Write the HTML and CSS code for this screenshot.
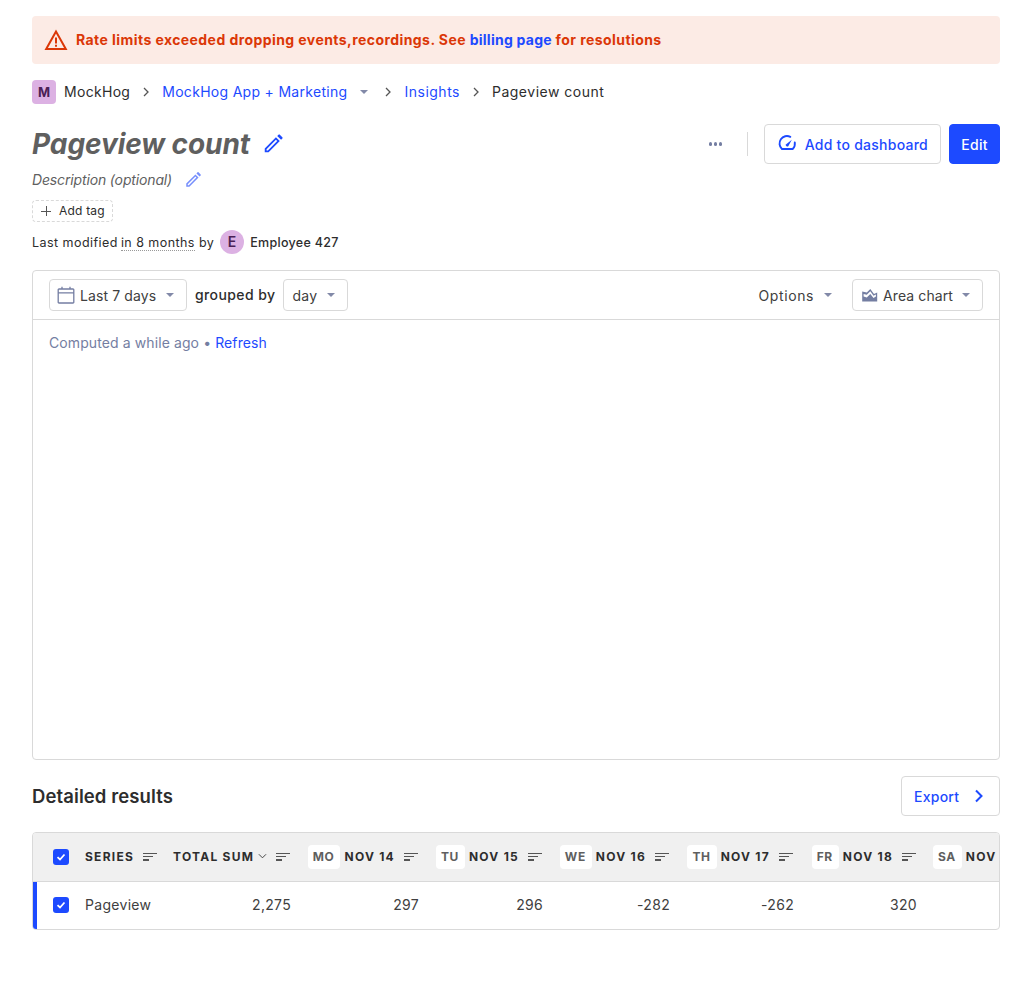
FILE: index.html
```html
<!DOCTYPE html>
<html>

<head>
  <meta charset="UTF-8">
  <title>Pageview count</title>
  <link rel="stylesheet" href="styles.css">
</head>

<body>
  <div class="alert">
    <svg class="alert-icon" width="24" height="24" viewBox="0 0 24 24">
      <path d="M12 3.600 2.200 21h19.600z" fill="none" stroke="currentColor" stroke-width="2"/>
      <path d="M11 9.500h2v6h-2zM11 16.800h2v2h-2z" fill="currentColor"/>
    </svg>
    <span>Rate limits exceeded dropping events,recordings. See <a href="#">billing page</a> for resolutions</span>
  </div>

  <nav class="breadcrumbs">
    <span class="org-badge">M</span>
    <span class="crumb">MockHog</span>
    <svg class="crumb-sep" width="8" height="10" viewBox="0 0 8 10"><path d="M2 1l4 4-4 4" fill="none" stroke="currentColor" stroke-width="1.300"/></svg>
    <a class="crumb" href="#">MockHog App + Marketing</a>
    <span class="caret caret-project"></span>
    <svg class="crumb-sep" width="8" height="10" viewBox="0 0 8 10"><path d="M2 1l4 4-4 4" fill="none" stroke="currentColor" stroke-width="1.300"/></svg>
    <a class="crumb crumb-wide" href="#">Insights</a>
    <svg class="crumb-sep" width="8" height="10" viewBox="0 0 8 10"><path d="M2 1l4 4-4 4" fill="none" stroke="currentColor" stroke-width="1.300"/></svg>
    <span class="crumb crumb-wide">Pageview count</span>
  </nav>

  <div class="page-head">
    <div class="title-row">
      <h1>Pageview count</h1>
      <svg class="pencil" width="22" height="22" viewBox="0 0 24 24"><path d="M3 21v-4.200L15.200 4.600l4.200 4.200L7.200 21zM5 17.600V19h1.400L16.600 8.800l-1.400-1.400zM16.600 3.200l1.400-1.400a1 1 0 0 1 1.400 0l2.800 2.800a1 1 0 0 1 0 1.400l-1.400 1.400z" fill="currentColor"/></svg>
    </div>
    <div class="head-actions">
      <span class="dots"><i></i><i></i><i></i></span>
      <span class="divider"></span>
      <button class="btn btn-dashboard">
        <svg width="20" height="20" viewBox="0 0 20 20"><path d="M13.500 2.800A7.500 7.500 0 0 0 5 15h11a7.500 7.500 0 0 0 2-6.500" fill="none" stroke="currentColor" stroke-width="1.900" stroke-linecap="round"/><path d="M8.700 10.800a1.800 1.800 0 0 0 2.700 1.400L15 5.600z" fill="currentColor"/></svg>
        Add to dashboard
      </button>
      <button class="btn btn-primary">Edit</button>
    </div>
  </div>

  <div class="description">
    <em>Description (optional)</em>
    <svg class="pencil pencil-light" width="18" height="18" viewBox="0 0 24 24"><path d="M3 21v-4.200L15.200 4.600l4.200 4.200L7.200 21zM5 17.600V19h1.400L16.600 8.800l-1.400-1.400zM16.600 3.200l1.400-1.400a1 1 0 0 1 1.400 0l2.800 2.800a1 1 0 0 1 0 1.400l-1.400 1.400z" fill="currentColor"/></svg>
  </div>

  <div class="add-tag"><span class="plus"></span>Add tag</div>

  <div class="modified">
    <span class="mod-text">Last modified</span>
    <span class="mod-text dotted">in 8 months</span>
    <span class="mod-text">by</span>
    <span class="avatar">E</span>
    <span class="mod-text author">Employee 427</span>
  </div>

  <section class="insight">
    <div class="insight-bar">
      <div class="bar-group">
        <div class="select select-date">
          <svg width="18" height="18" viewBox="0 0 18 18"><path d="M2 3h14a.8.8 0 0 1 .8.8v12.400a.8.8 0 0 1-.8.8H2a.8.8 0 0 1-.8-.8V3.800A.8.8 0 0 1 2 3zM1.500 6.800h15M5 .8V3M13 .8V3" fill="none" stroke="currentColor" stroke-width="1.300"/></svg>
          <span class="label">Last 7 days</span>
          <span class="caret"></span>
        </div>
        <strong class="grouped">grouped by</strong>
        <div class="select select-interval">
          <span class="label">day</span>
          <span class="caret"></span>
        </div>
      </div>
      <div class="bar-group">
        <div class="options"><span class="label">Options</span> <span class="caret"></span></div>
        <div class="select select-chart">
          <svg width="18" height="18" viewBox="0 0 18 18"><path fill-rule="evenodd" d="M1.200 5.500V15.500H16.200V6.500L13 8 9.300 3 5.800 6.500zM2.600 8 5.800 8.800 9.300 5.300 12.500 9.700 14.900 8.500V10.500L12.500 12 9.300 8 5.800 11.500 2.600 10.500z" fill="currentColor"/></svg>
          <span class="label">Area chart</span>
          <span class="caret"></span>
        </div>
      </div>
    </div>
    <div class="insight-body">
      Computed a while ago <b class="bullet">•</b> <a href="#">Refresh</a>
    </div>
  </section>

  <div class="results-head">
    <h2>Detailed results</h2>
    <button class="btn btn-export">
      Export
      <svg width="12" height="14" viewBox="0 0 12 14"><path d="M3 1.500 8.500 7 3 12.500" fill="none" stroke="currentColor" stroke-width="2"/></svg>
    </button>
  </div>

  <div class="table-wrap">
    <table>
      <colgroup>
        <col class="col-check">
        <col class="col-series">
        <col class="col-total">
        <col class="col-mo">
        <col class="col-tu">
        <col class="col-we">
        <col class="col-th">
        <col class="col-fr">
        <col class="col-sa">
      </colgroup>
      <thead>
        <tr>
          <th class="cell-check"><span class="checkbox"><svg width="12" height="12" viewBox="0 0 12 12"><path d="M2.500 6.200 5 8.500l4.500-5" fill="none" stroke="#fff" stroke-width="1.800"/></svg></span></th>
          <th><div class="th-inner">SERIES <span class="sort"><i></i><i></i><i></i></span></div></th>
          <th>
            <div class="th-inner th-right">
              <span>TOTAL SUM</span>
              <svg class="chev" width="10" height="7" viewBox="0 0 10 7"><path d="M1 1l4 4 4-4" fill="none" stroke="currentColor"/></svg>
              <span class="sort"><i></i><i></i><i></i></span>
            </div>
          </th>
          <th><div class="th-inner th-right"><span class="day">MO</span>NOV 14 <span class="sort"><i></i><i></i><i></i></span></div></th>
          <th><div class="th-inner th-right"><span class="day">TU</span>NOV 15 <span class="sort"><i></i><i></i><i></i></span></div></th>
          <th><div class="th-inner th-right"><span class="day">WE</span>NOV 16 <span class="sort"><i></i><i></i><i></i></span></div></th>
          <th><div class="th-inner th-right"><span class="day">TH</span>NOV 17 <span class="sort"><i></i><i></i><i></i></span></div></th>
          <th><div class="th-inner th-right"><span class="day">FR</span>NOV 18 <span class="sort"><i></i><i></i><i></i></span></div></th>
          <th><div class="th-inner"><span class="day">SA</span>NOV</div></th>
        </tr>
      </thead>
      <tbody>
        <tr>
          <td class="cell-check cell-marked"><span class="checkbox"><svg width="12" height="12" viewBox="0 0 12 12"><path d="M2.500 6.200 5 8.500l4.500-5" fill="none" stroke="#fff" stroke-width="1.800"/></svg></span></td>
          <td>Pageview</td>
          <td class="num">2,275</td>
          <td class="num">297</td>
          <td class="num">296</td>
          <td class="num">-282</td>
          <td class="num">-262</td>
          <td class="num">320</td>
          <td class="num"></td>
        </tr>
      </tbody>
    </table>
  </div>
</body>

</html>
```

FILE: styles.css
```css
* {
  box-sizing: border-box;
}

body {
  margin: 0;
  padding: 16px 32px;
  font-family: Inter, "Liberation Sans", sans-serif;
  font-size: 14px;
  line-height: 20px;
  color: #2d2d2d;
  background: #fff;
}

a {
  color: #1d4aff;
  text-decoration: none;
}

h1,
h2 {
  margin: 0;
}

/* alert */
.alert {
  display: flex;
  align-items: center;
  gap: 8px;
  height: 48px;
  padding: 0 12px;
  border-radius: 4px;
  background: #fcebe5;
  color: #db3707;
  font-weight: 700;
  letter-spacing: 0.43px;
}

.alert a {
  font-weight: 700;
  letter-spacing: 0.25px;
}

.alert-icon {
  flex: none;
}

/* breadcrumbs */
.breadcrumbs {
  display: flex;
  align-items: center;
  height: 24px;
  margin-top: 16px;
}

.crumb {
  letter-spacing: 0.3px;
}

.crumb-wide {
  letter-spacing: 0.5px;
}

.org-badge {
  display: flex;
  align-items: center;
  justify-content: center;
  width: 24px;
  height: 24px;
  margin-right: 8px;
  border-radius: 4px;
  background: #dcb1e3;
  color: #4a2055;
  font-size: 13px;
  font-weight: 700;
}

.crumb-sep {
  margin: 0 12px;
  color: #555;
}

.caret {
  display: inline-block;
  flex: none;
  width: 0;
  height: 0;
  border-left: 4px solid transparent;
  border-right: 4px solid transparent;
  border-top: 4px solid #8289a8;
}

.caret-project {
  margin-left: 13px;
  margin-right: 4px;
}

/* title */
.page-head {
  display: flex;
  justify-content: space-between;
  align-items: center;
  height: 40px;
  margin-top: 20px;
}

.title-row {
  display: flex;
  align-items: center;
  gap: 12px;
}

h1 {
  font-size: 28px;
  line-height: 40px;
  font-weight: 700;
  font-style: italic;
  letter-spacing: -0.07px;
  color: #5f5f5f;
}

.pencil {
  color: #1d4aff;
}

.pencil-light {
  color: #778ffc;
}

.head-actions {
  display: flex;
  align-items: center;
}

.dots {
  display: flex;
  gap: 1.500px;
  margin-right: 25px;
}

.dots i {
  width: 3.500px;
  height: 3.500px;
  border-radius: 50%;
  background: #747ea2;
}

.divider {
  width: 1px;
  height: 24px;
  margin-right: 16px;
  background: #d9d9d9;
}

.btn {
  display: flex;
  align-items: center;
  height: 40px;
  padding: 0 12px;
  border: 1px solid #d9d9d9;
  border-radius: 4px;
  background: #fff;
  color: #1d4aff;
  font: 500 14px Inter, "Liberation Sans", sans-serif;
  letter-spacing: 0.25px;
}

.btn-dashboard {
  width: 177px;
  gap: 8px;
  white-space: nowrap;
}

.btn-primary {
  width: 51px;
  margin-left: 8px;
  padding: 0;
  justify-content: center;
  border-color: #1d4aff;
  background: #1d4aff;
  color: #fff;
}

.description {
  display: flex;
  align-items: center;
  gap: 12px;
  height: 24px;
  margin-top: 4px;
  color: #5f5f5f;
  letter-spacing: -0.15px;
}

.add-tag {
  display: flex;
  align-items: center;
  width: 81px;
  height: 22px;
  margin-top: 8px;
  padding-left: 8px;
  border: 1px dashed #d9d9d9;
  border-radius: 4px;
  font-size: 12px;
  letter-spacing: 0.2px;
}

.plus {
  width: 10px;
  height: 10px;
  margin-right: 8px;
  background:
    linear-gradient(#555, #555) center / 10px 1px no-repeat,
    linear-gradient(#555, #555) center / 1px 10px no-repeat;
}

.modified {
  display: flex;
  align-items: center;
  height: 24px;
  margin-top: 8px;
  font-size: 12.500px;
  letter-spacing: 0.45px;
}

.mod-text {
  margin-top: 2px;
}

.dotted {
  margin-left: 3px;
  margin-right: 4px;
  border-bottom: 1px dotted #999;
  line-height: 15px;
}

.avatar {
  display: flex;
  align-items: center;
  justify-content: center;
  width: 24px;
  height: 24px;
  margin: 0 6px;
  border-radius: 50%;
  background: #dcb1e3;
  color: #4a2055;
  font-size: 14px;
  font-weight: 600;
}

.author {
  font-weight: 500;
  letter-spacing: 0.3px;
}

/* insight card */
.insight {
  height: 490px;
  margin-top: 16px;
  border: 1px solid #d9d9d9;
  border-radius: 4px;
}

.insight-bar {
  display: flex;
  justify-content: space-between;
  align-items: center;
  height: 49px;
  padding: 0 16px;
  border-bottom: 1px solid #d9d9d9;
}

.bar-group {
  display: flex;
  align-items: center;
}

.select {
  display: flex;
  align-items: center;
  height: 32px;
  padding: 0 8px;
  border: 1px solid #d9d9d9;
  border-radius: 4px;
  color: #404040;
}

.select svg {
  flex: none;
  color: #747ea2;
}

.label {
  margin-top: 2px;
  letter-spacing: 0.1px;
}

.select .caret {
  margin-left: 10px;
}

.select-date {
  width: 138px;
}

.select-date svg {
  margin-left: -1px;
}

.select-date .label {
  margin-left: 5px;
}

.grouped {
  margin: 0 8px;
  font-weight: 500;
  letter-spacing: 0.4px;
}

.select-interval {
  width: 65px;
}

.select-interval .label {
  letter-spacing: 0.3px;
}

.options {
  display: flex;
  align-items: center;
  gap: 10px;
  margin-right: 20px;
  color: #404040;
}

.options .label {
  letter-spacing: 0.6px;
}

.select-chart {
  width: 131px;
  gap: 4px;
}

.select-chart .caret {
  margin-left: 5px;
}

.insight-body {
  padding: 13px 16px;
  color: #747ea2;
  letter-spacing: 0.1px;
}

.bullet {
  font-weight: 400;
}

/* results */
.results-head {
  display: flex;
  justify-content: space-between;
  align-items: center;
  height: 40px;
  margin-top: 16px;
}

h2 {
  font-size: 18.500px;
  font-weight: 600;
  letter-spacing: 0.1px;
}

.btn-export {
  width: 99px;
  padding-right: 14px;
  justify-content: space-between;
}

.table-wrap {
  margin-top: 16px;
  border: 1px solid #d9d9d9;
  border-radius: 4px;
  overflow: hidden;
}

table {
  width: 966px;
  border-collapse: collapse;
  table-layout: fixed;
}

.col-check { width: 44px; }
.col-series { width: 88px; }
.col-total { width: 134px; }
.col-mo { width: 128px; }
.col-tu { width: 124px; }
.col-we { width: 127px; }
.col-th { width: 124px; }
.col-fr { width: 123px; }
.col-sa { width: 74px; }

th {
  height: 48px;
  padding: 0 8px;
  border-bottom: 1px solid #d9d9d9;
  background: #f0f0f0;
  font-size: 12px;
  font-weight: 700;
  letter-spacing: 1.25px;
  white-space: nowrap;
  text-align: left;
  overflow: hidden;
}

td {
  height: 48px;
  padding: 0 8px;
  color: #404040;
  letter-spacing: 0.3px;
}

.th-inner {
  display: flex;
  align-items: center;
}

.th-right {
  justify-content: flex-end;
}

.num {
  text-align: right;
}

.cell-check {
  padding: 0 0 0 20px;
}

.cell-marked {
  box-shadow: inset 4px 0 0 #1d4aff;
}

.checkbox {
  display: flex;
  align-items: center;
  justify-content: center;
  width: 16px;
  height: 16px;
  border-radius: 3px;
  background: #1d4aff;
}

.sort {
  display: inline-flex;
  flex-direction: column;
  gap: 2px;
  width: 14px;
  margin-left: 9px;
  margin-right: 1px;
}

.sort i {
  display: block;
  height: 1.300px;
  background: #555;
}

.sort i:nth-child(1) { width: 14px; }
.sort i:nth-child(2) { width: 10px; }
.sort i:nth-child(3) { width: 6px; }

.chev {
  margin-left: 4px;
  color: #333;
}

.day {
  display: flex;
  align-items: center;
  height: 24px;
  margin-right: 4px;
  padding: 0 6px 0 5px;
  border-radius: 4px;
  background: #fff;
  color: #5f5f5f;
  letter-spacing: 0.6px;
}
```
